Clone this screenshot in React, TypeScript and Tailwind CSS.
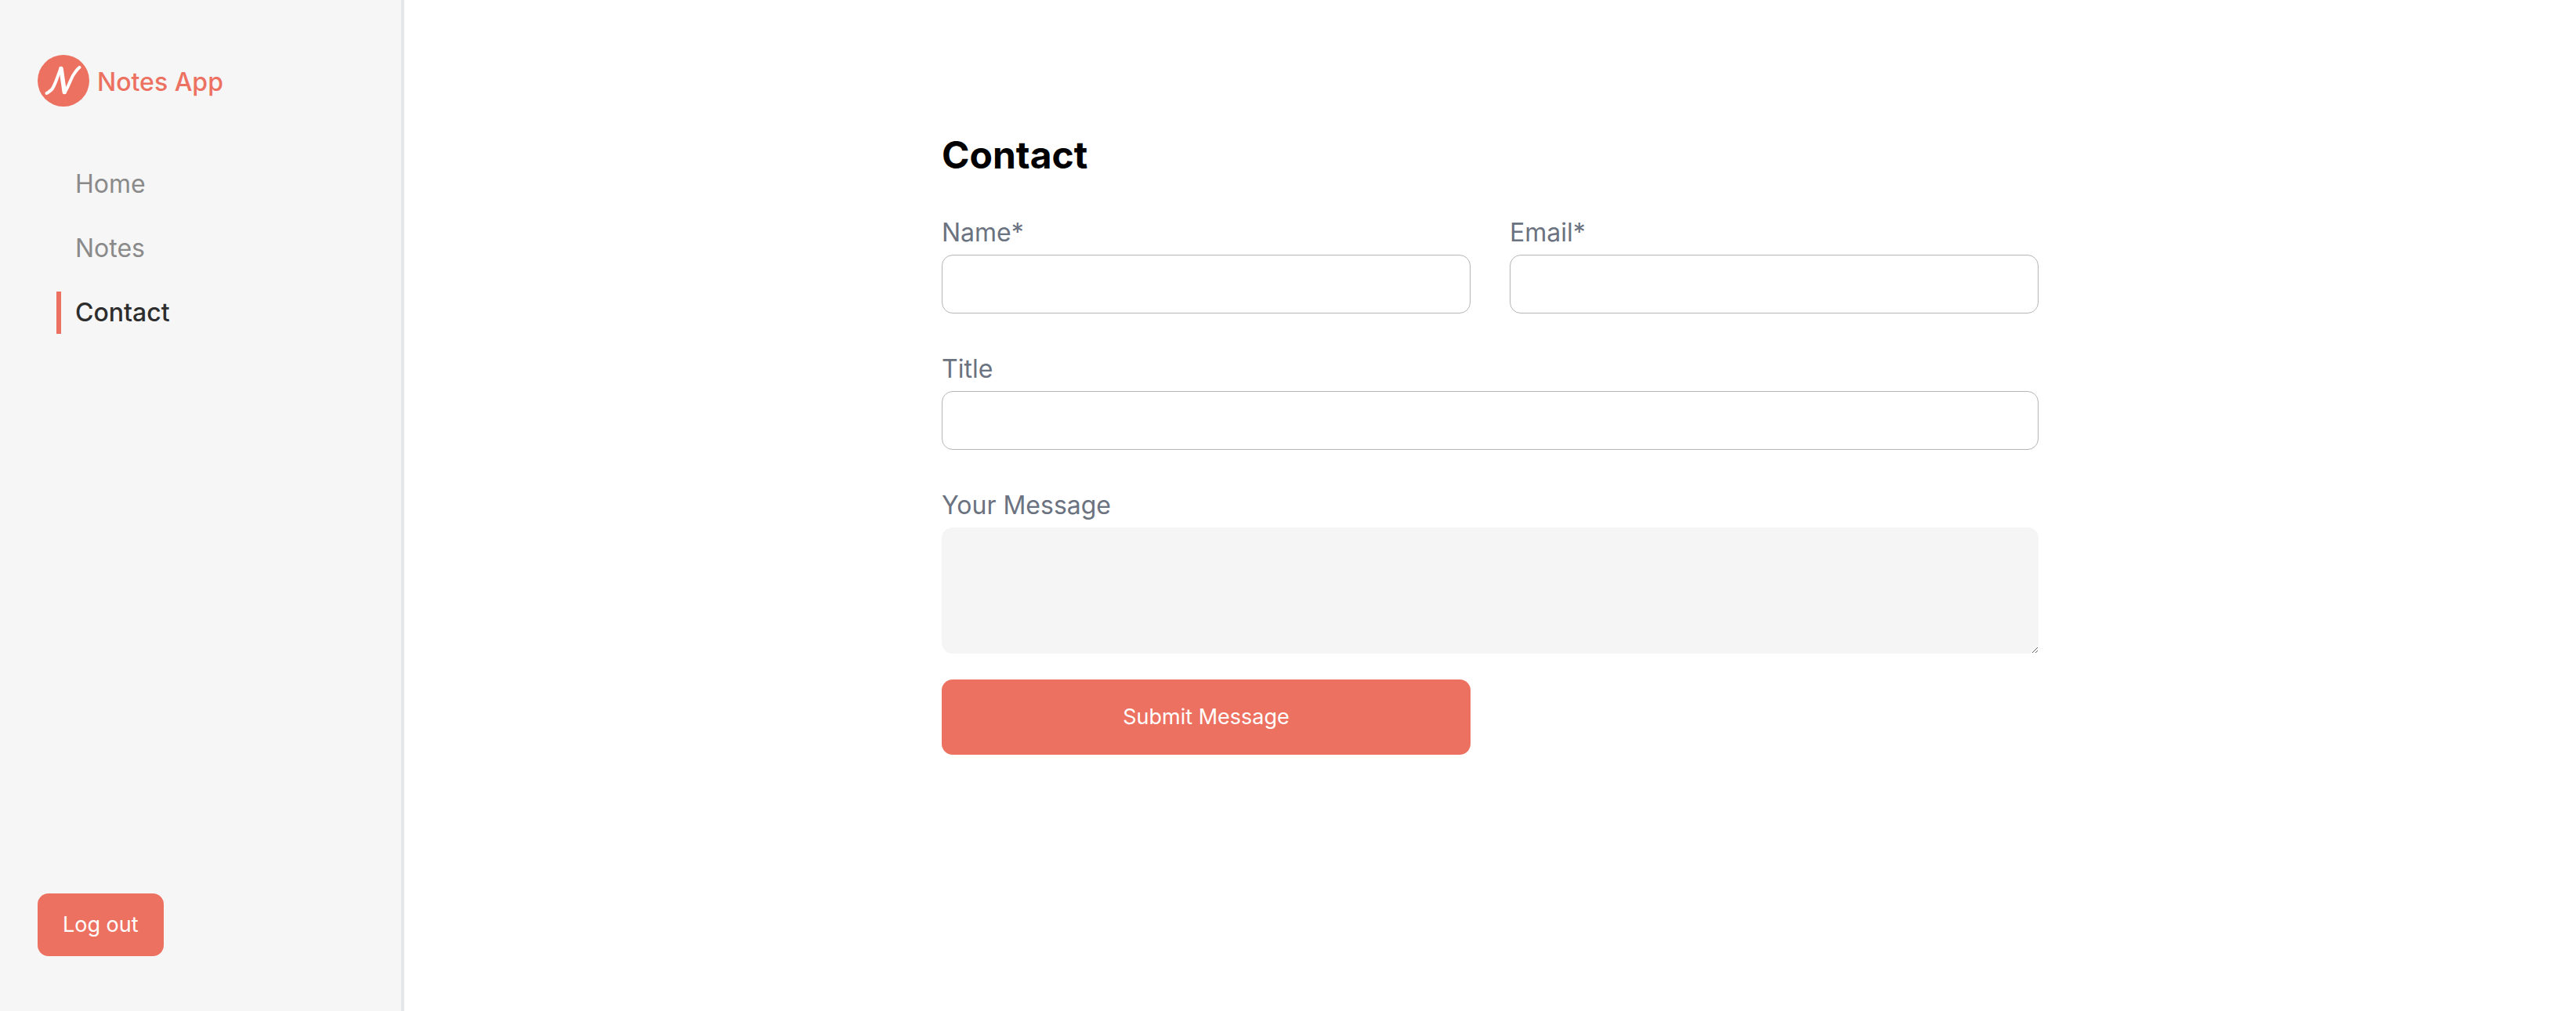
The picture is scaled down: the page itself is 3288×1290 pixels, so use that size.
import React from "react";

const fieldClass =
  "block h-[75px] w-full rounded-[14px] border border-[#b5b5b5] bg-white px-4 text-[32px]";
const labelClass = "mb-1 block text-[32px] leading-[48px] text-[#6b7280]";

const links = [
  { label: "Home", active: false },
  { label: "Notes", active: false },
  { label: "Contact", active: true },
];

function Logo() {
  return (
    <svg viewBox="0 0 66 66" className="size-[66px] shrink-0" aria-hidden="true">
      <circle cx="33" cy="33" r="33" fill="#ed7161" />
      <g fill="none" stroke="#fff" strokeLinecap="round" strokeLinejoin="round">
        <path d="M11.5 49C13.5 48.5 15 46.5 16.5 45.5C21 43 24 31 29.5 17.5" strokeWidth="4" />
        <path d="M30 17.5L34.3 47.5" strokeWidth="5.5" />
        <path d="M34.5 48C39 42 42 31 46 25C49 20.500 51 17.500 53.500 16" strokeWidth="4" />
      </g>
    </svg>
  );
}

function Sidebar() {
  return (
    <aside className="flex w-[516px] shrink-0 flex-col border-r-4 border-[#e5e7eb] bg-[#f6f6f6] px-12 py-[70px]">
      <a href="#" className="flex items-center gap-2.5 text-[32px] font-medium text-[#ed7161]">
        <Logo />
        <span className="pt-1">Notes App</span>
      </a>
      <nav className="mt-[72px] ml-6 flex flex-col gap-7">
        {links.map((link) => (
          <a
            key={link.label}
            href="#"
            aria-current={link.active ? "page" : undefined}
            className={
              link.active
                ? "border-l-[6px] border-[#ed7161] pl-[18px] text-[32px] leading-[54px] font-medium text-[#2d2d2d]"
                : "border-l-[6px] border-transparent pl-[18px] text-[32px] leading-[54px] text-[#8a8a8a]"
            }
          >
            {link.label}
          </a>
        ))}
      </nav>
      <button
        type="button"
        className="mt-auto h-20 self-start rounded-[14px] bg-[#ed7161] px-8 text-[27px] text-white"
      >
        Log out
      </button>
    </aside>
  );
}

export default function App() {
  return (
    <div className="flex min-h-screen bg-white font-['Inter',sans-serif]">
      <Sidebar />
      <main className="flex-1 pt-[166px]">
        <form className="mx-auto max-w-[1400px]">
          <h1 className="text-[48px] leading-[64px] font-bold text-black">Contact</h1>
          <div className="mt-[43px] grid grid-cols-2 gap-x-[50px] gap-y-[47px]">
            <div>
              <label htmlFor="name" className={labelClass}>Name*</label>
              <input id="name" type="text" required className={fieldClass} />
            </div>
            <div>
              <label htmlFor="email" className={labelClass}>Email*</label>
              <input id="email" type="email" required className={fieldClass} />
            </div>
            <div className="col-span-2">
              <label htmlFor="title" className={labelClass}>Title</label>
              <input id="title" type="text" className={fieldClass} />
            </div>
            <div className="col-span-2">
              <label htmlFor="message" className={labelClass}>Your Message</label>
              <textarea
                id="message"
                className="block h-[161px] w-full resize rounded-[14px] bg-[#f5f5f5] p-4 text-[32px]"
              />
            </div>
          </div>
          <div className="mt-[33px] grid grid-cols-2 gap-x-[50px]">
            <button type="submit" className="h-24 rounded-[14px] bg-[#ed7161] text-[27px] text-white">
              Submit Message
            </button>
          </div>
        </form>
      </main>
    </div>
  );
}
